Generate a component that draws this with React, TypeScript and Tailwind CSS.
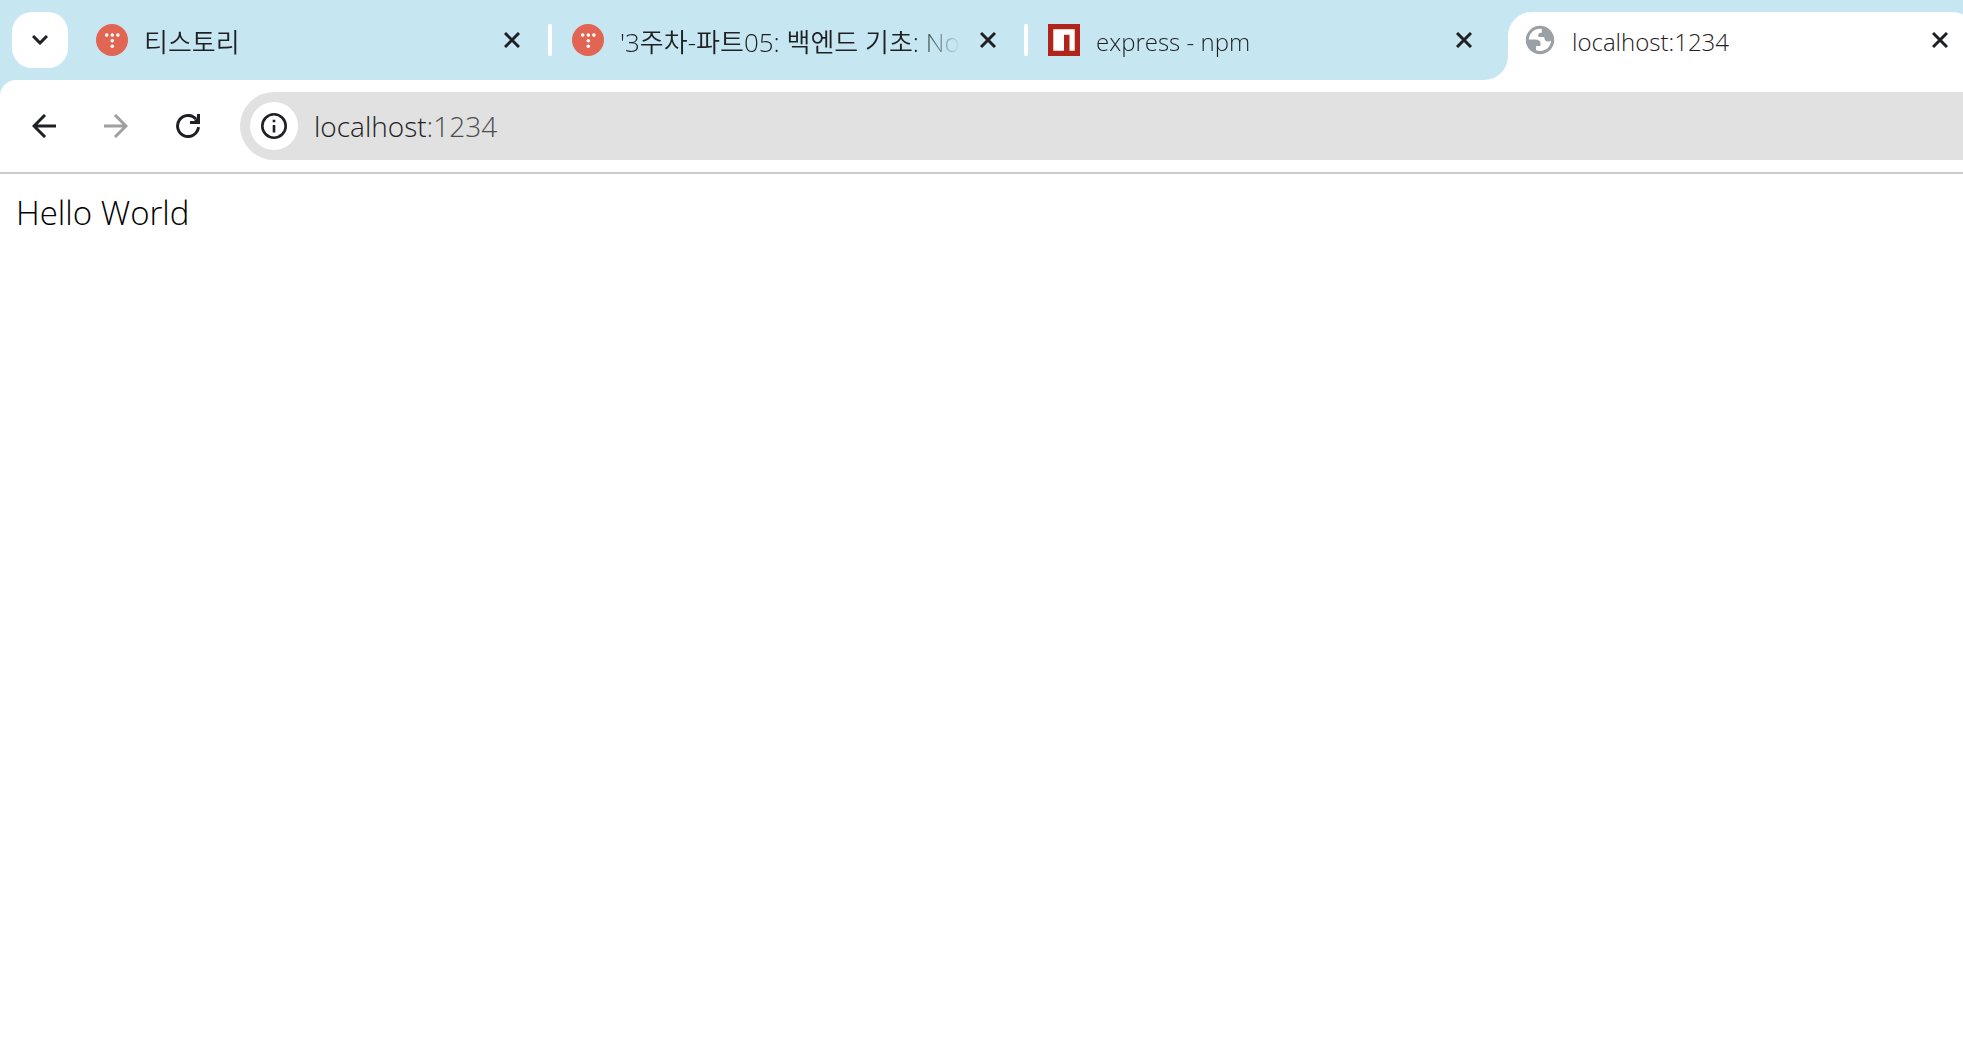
import { useState } from "react";

type TabData = {
  id: number;
  title: string;
  icon: "tistory" | "npm";
  size: string;
};

const tabs: TabData[] = [
  { id: 1, title: "티스토리", icon: "tistory", size: "text-[26px]" },
  { id: 2, title: "'3주차-파트05: 백엔드 기초: No", icon: "tistory", size: "text-[26px]" },
  { id: 3, title: "express - npm", icon: "npm", size: "text-2xl" },
];

/* FAVICONS */
function TistoryIcon() {
  return (
    <svg viewBox="0 0 32 32" className="size-8 shrink-0" aria-hidden="true">
      <circle cx="16" cy="16" r="16" fill="#e16552" />
      <g fill="#fff">
        <circle cx="10.7" cy="11.1" r="1.8" />
        <circle cx="16.3" cy="11.1" r="1.8" />
        <circle cx="21.9" cy="11.1" r="1.8" />
        <circle cx="16.3" cy="16.7" r="1.8" />
        <circle cx="16.3" cy="22.3" r="1.8" />
      </g>
    </svg>
  );
}

function NpmIcon() {
  return (
    <svg viewBox="0 0 32 32" className="size-8 shrink-0" aria-hidden="true">
      <path fill="#b0251a" d="M0 0h32v32H0z" />
      <path fill="#fff" d="M5.300 5.300h21.400v21.400h-5.200V10.700H16v16H5.300z" />
    </svg>
  );
}

function GlobeIcon() {
  return (
    <svg viewBox="0 0 32 32" className="size-8 shrink-0" aria-hidden="true">
      <circle cx="16" cy="16" r="14.200" fill="#9aa0a6" />
      <path
        fill="#fff"
        d="M17.800 5C11 4 5.200 9 4.900 15.500h6.600c3 0 5 1.200 5 3.600v2.800h-4.400v4.300c1.300.6 2.700.8 4.100.8 6 0 10.700-4.600 11-10.400-1 .7-2.200 1-3.300.9-2.300-.1-3.600-1.600-3.600-4.500h-5.800c-.8-2.600.2-4.200 2.300-4.300h1z"
      />
    </svg>
  );
}

const icons = {
  tistory: TistoryIcon,
  npm: NpmIcon,
};

function CloseButton({ title }: { title: string }) {
  return (
    <button aria-label={`Close ${title}`} className="flex size-8 shrink-0 items-center justify-center rounded-full">
      <svg viewBox="0 0 16 16" className="size-4" fill="none" stroke="#1f2023" strokeWidth="3">
        <path d="M1 1l14 14M15 1L1 15" />
      </svg>
    </button>
  );
}

/* tab in the background, closed off by a thin white divider */
function Tab({ tab, last }: { tab: TabData; last: boolean }) {
  const Icon = icons[tab.icon];
  return (
    <div className="flex h-14 w-[476px] shrink-0 items-center pl-5">
      <Icon />
      <button className={`ml-4 min-w-0 flex-1 mask-r-from-88% pt-1 text-left leading-8 whitespace-nowrap ${tab.size}`}>
        {tab.title}
      </button>
      <div className="ml-3 flex items-center">
        <CloseButton title={tab.title} />
        <span className={last ? "ml-5 w-1" : "ml-5 h-8 w-1 rounded-xs bg-white"} />
      </div>
    </div>
  );
}

function ActiveTab() {
  return (
    <div className="relative ml-1 flex h-[68px] w-[468px] shrink-0 rounded-t-3xl bg-white pt-3 pr-5 pl-4">
      {/* curved foot on the left edge */}
      <span className="absolute bottom-0 -left-6 size-6 bg-white">
        <span className="block size-6 rounded-br-3xl bg-[#c6e6f1]" />
      </span>
      <GlobeIcon />
      <button className="ml-4 h-8 flex-1 pt-1 text-left text-2xl leading-7">localhost:1234</button>
      <CloseButton title="localhost:1234" />
    </div>
  );
}

function Toolbar() {
  const [host, setHost] = useState("localhost");
  return (
    <div className="bg-[#c6e6f1]">
      <div className="flex items-center rounded-tl-2xl border-b-2 border-[#cbcbcb] bg-white py-3 pl-5">
        <button aria-label="Back" className="flex size-12 items-center justify-center">
          <svg viewBox="0 0 24 24" className="size-6" fill="none" stroke="#1f2023" strokeWidth="3">
            <path d="M24 12H2M13 1L2 12l11 11" />
          </svg>
        </button>
        <button aria-label="Forward" disabled className="ml-6 flex size-12 items-center justify-center">
          <svg viewBox="0 0 24 24" className="size-6" fill="none" stroke="#a0a0a0" strokeWidth="3">
            <path d="M0 12h22M11 1l11 11-11 11" />
          </svg>
        </button>
        <button aria-label="Reload" className="ml-6 flex size-12 items-center justify-center">
          <svg viewBox="0 0 24 24" className="size-6">
            <path d="M22.500 13.200A10.500 10.500 0 1 1 20 5.100" fill="none" stroke="#1f2023" strokeWidth="3" />
            <path d="M21 0h3v10H14V7h4l3-3z" fill="#1f2023" />
          </svg>
        </button>
        <div className="ml-7 flex h-[68px] flex-1 items-center rounded-l-full bg-[#e1e1e1] pl-[10px]">
          <button aria-label="View site information" className="flex size-12 items-center justify-center rounded-full bg-white">
            <svg viewBox="0 0 26 26" className="size-[26px]">
              <circle cx="13" cy="13" r="11.700" fill="none" stroke="#1f2023" strokeWidth="2.600" />
              <path d="M11.700 12h2.600v7.500h-2.600zM11.700 6.800h2.600v2.500h-2.600z" fill="#1f2023" />
            </svg>
          </button>
          <label className="flex flex-1 items-center pl-4 text-[28px] leading-9 text-[#4b4c4f]">
            <input
              aria-label="Address"
              value={host}
              onChange={(e) => setHost(e.target.value)}
              className="field-sizing-content text-[#1f2023] outline-none"
            />
            <span>:1234</span>
          </label>
        </div>
      </div>
    </div>
  );
}

export default function App() {
  return (
    <div className="min-h-screen overflow-hidden bg-white font-['Open_Sans','Noto_Sans_CJK_KR',sans-serif] font-[350] text-[#1f2023]">
      <header>
        <nav className="flex h-20 items-start overflow-hidden bg-[#c6e6f1] pt-3 pl-3">
          <button aria-label="Search tabs" className="mr-2 flex size-14 shrink-0 items-center justify-center rounded-[20px] bg-white">
            <svg viewBox="0 0 16 10" className="h-[10px] w-4" fill="none" stroke="#1f2023" strokeWidth="3">
              <path d="M1 1l7 7 7-7" />
            </svg>
          </button>
          {tabs.map((tab, i) => (
            <Tab key={tab.id} tab={tab} last={i === tabs.length - 1} />
          ))}
          <ActiveTab />
        </nav>
        <Toolbar />
      </header>
      <main className="px-4 pt-[15px] text-[33px] leading-12 text-black">Hello World</main>
    </div>
  );
}
